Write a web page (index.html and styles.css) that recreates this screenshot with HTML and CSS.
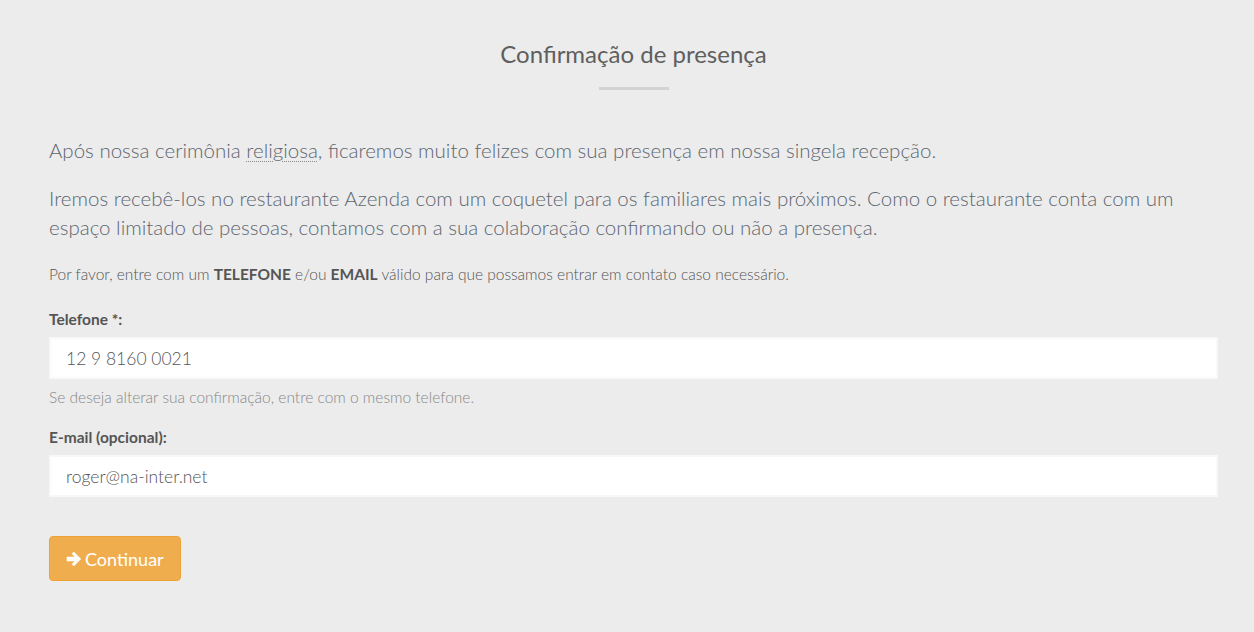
FILE: index.html
```html
<!DOCTYPE html>
<html lang="pt-BR">
<head>
<meta charset="utf-8">
<title>Confirmação de presença</title>
<link rel="stylesheet" href="styles.css">
</head>
<body>
<main class="page">
  <header class="heading">
    <h1 class="title">Confirmação de presença</h1>
    <div class="title-bar"></div>
  </header>
  <p class="lead">Após nossa cerimônia <abbr class="dotted" title="religiosa">religiosa</abbr>, ficaremos muito felizes com sua presença em nossa singela recepção.</p>
  <p class="lead">Iremos recebê-los no restaurante Azenda com um coquetel para os familiares mais próximos. Como o restaurante conta com um espaço limitado de pessoas, contamos com a sua colaboração confirmando ou não a presença.</p>
  <p class="note">Por favor, entre com um <strong>TELEFONE</strong> e/ou <strong>EMAIL</strong> válido para que possamos entrar em contato caso necessário.</p>
  <form class="form">
    <div class="field">
      <label class="label" for="tel">Telefone *:</label>
      <input class="input" id="tel" type="text" value="12 9 8160 0021">
      <span class="help">Se deseja alterar sua confirmação, entre com o mesmo telefone.</span>
    </div>
    <div class="field">
      <label class="label" for="email">E-mail (opcional):</label>
      <input class="input" id="email" type="text" value="roger@na-inter.net">
    </div>
    <div class="actions">
      <button type="button" class="btn">
        <svg class="arrow" viewBox="0 0 16 16" width="16" height="16" aria-hidden="true"><path d="M1 6h8.2L6 2.8 7.8 1 14.8 8l-7 7L6 13.2 9.2 10H1z" fill="#fff" stroke="#fff" stroke-width="0.6" stroke-linejoin="round"/></svg>
        <span>Continuar</span>
      </button>
    </div>
  </form>
</main>
</body>
</html>
```
FILE: styles.css
```css
html, body {
  margin: 0;
  padding: 0;
  background: #ececec;
}
body {
  font-family: Lato, "Open Sans", sans-serif;
  color: #666;
}
.page {
  padding: 39px 36px 40px 49px;
}
.heading {
  display: flex;
  flex-direction: column;
  align-items: center;
}
.title {
  margin: 0;
  font-size: 24px;
  font-weight: 400;
  line-height: 30px;
  color: #5f5f5f;
}
.title-bar {
  width: 70px;
  height: 3px;
  background: #d3d3d3;
  margin-top: 18px;
}
.lead {
  margin: 46px 0 0;
  font-size: 20.5px;
  font-weight: 300;
  line-height: 29px;
  color: #5d6670;
}
.lead + .lead {
  margin-top: 19px;
}
.dotted {
  text-decoration: underline dotted #8a8a8a;
  text-decoration-thickness: 1px;
  text-underline-offset: 3px;
}
.note {
  margin: 22px 0 0;
  font-size: 15.5px;
  font-weight: 300;
  line-height: 20px;
  color: #555;
}
.note strong {
  font-weight: 700;
}
.form {
  margin-top: 25px;
}
.field {
  display: flex;
  flex-direction: column;
  margin-bottom: 20px;
}
.label {
  font-size: 15.5px;
  font-weight: 700;
  color: #555;
  line-height: 20px;
  margin-bottom: 8px;
}
.input {
  box-sizing: border-box;
  height: 42px;
  width: 100%;
  border: 2px solid #f8f8f8;
  border-radius: 0;
  background: #fff;
  padding: 0 15px;
  font-family: Lato, sans-serif;
  font-size: 17.5px;
  font-weight: 300;
  color: #555;
  outline: none;
}
.help {
  margin-top: 8px;
  font-size: 15.5px;
  font-weight: 300;
  color: #888;
  line-height: 20px;
}
.actions {
  margin-top: 39px;
}
.btn {
  display: inline-flex;
  align-items: center;
  gap: 3px;
  height: 45px;
  padding: 0 16px;
  background: #f0ad4e;
  border: 1px solid #eea236;
  border-radius: 4px;
  color: #fff;
  font-family: Lato, sans-serif;
  font-size: 18px;
  font-weight: 400;
  cursor: pointer;
}
.arrow {
  display: block;
}
```
